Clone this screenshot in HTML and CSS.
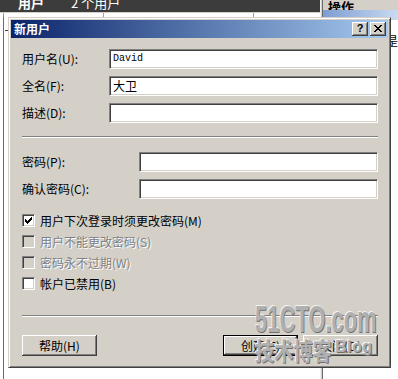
FILE: index.html
```html
<!DOCTYPE html>
<html lang="zh-CN">
<head>
<meta charset="utf-8">
<title>新用户</title>
<link rel="stylesheet" href="styles.css">
</head>
<body>
<div class="mmc">
  <div class="leftpane">
    <div class="darkbar"><span class="strong">用户</span><span>2 个用户</span></div>
    <div class="listhead"><div class="col c1"></div><div class="col c2"></div><div class="col c3"></div></div>
    <div class="listbody"><div class="tick"></div></div>
  </div>
  <div class="splitter"></div>
  <div class="rightpane">
    <div class="acthead">操作</div>
    <div class="actbar"></div>
    <div class="actbody"><span class="peek">是</span></div>
  </div>
</div>

<div class="dialog">
  <div class="titlebar">
    <span class="title">新用户</span>
    <div class="tbtns">
      <div class="tbtn help">?</div>
      <div class="tbtn close">
        <svg width="8" height="7" viewBox="0 0 8 7" shape-rendering="crispEdges"><path d="M0 0h2v1h-2zM6 0h2v1h-2zM1 1h2v1h-2zM5 1h2v1h-2zM2 2h4v1h-4zM3 3h2v1h-2zM2 4h4v1h-4zM1 5h2v1h-2zM5 5h2v1h-2zM0 6h2v1h-2zM6 6h2v1h-2z" fill="#000"/></svg>
      </div>
    </div>
  </div>
  <div class="content">
    <div class="grid g1">
      <label>用户名(U):</label><div class="field mono">David</div>
      <label>全名(F):</label><div class="field">大卫</div>
      <label>描述(D):</label><div class="field"></div>
    </div>
    <div class="hr hr1"></div>
    <div class="grid g2">
      <label>密码(P):</label><div class="field"></div>
      <label>确认密码(C):</label><div class="field"></div>
    </div>
    <div class="checks">
      <div class="chk"><span class="box"><svg width="7" height="7" viewBox="0 0 7 7" shape-rendering="crispEdges"><path d="M6 0h1v1h-1zM5 1h2v1h-2zM0 2h1v1h-1zM4 2h3v1h-3zM0 3h2v1h-2zM3 3h3v1h-3zM0 4h5v1h-5zM1 5h3v1h-3zM2 6h1v1h-1z" fill="#000"/></svg></span><span>用户下次登录时须更改密码(M)</span></div>
      <div class="chk disabled"><span class="box"></span><span>用户不能更改密码(S)</span></div>
      <div class="chk disabled"><span class="box"></span><span>密码永不过期(W)</span></div>
      <div class="chk"><span class="box"></span><span>帐户已禁用(B)</span></div>
    </div>
    <div class="hr hr2"></div>
    <div class="buttons">
      <button class="btn">帮助(H)</button>
      <div class="right">
        <button class="btn default">创建(E)</button>
        <button class="btn">关闭(O)</button>
      </div>
    </div>
  </div>
</div>

<div class="watermark">
  <div class="wm-top">51CTO.com</div>
  <div class="wm-bottom"><span class="wm-cn">技术博客</span><span class="wm-blog">Blog</span></div>
</div>
</body>
</html>
```

FILE: styles.css
```css
* { box-sizing: border-box; }
html, body { margin: 0; padding: 0; }
body {
  width: 398px;
  height: 379px;
  overflow: hidden;
  background: #fff;
  font-family: "Noto Sans CJK SC", "Noto Sans", sans-serif;
  font-size: 12px;
  color: #000;
  position: relative;
}

/* background management console */
.mmc { display: flex; height: 379px; }
.leftpane { width: 325px; display: flex; flex-direction: column; }
.darkbar {
  height: 12px;
  background: #3c3c3c;
  color: #fff;
  overflow: hidden;
  display: flex;
  gap: 27px;
  padding-left: 18px;
  font-size: 13px;
  line-height: 13px;
}
.darkbar span { margin-top: -4px; }
.darkbar .strong { font-weight: bold; }
.listhead { height: 5px; border-top: 1px solid #d4d0c8; display: flex; }
.listhead .col { height: 100%; border-right: 1px solid #a0a0a0; }
.listhead .c1 { width: 4px; }
.listhead .c2 { width: 100px; }
.listhead .c3 { width: 150px; }
.listbody { flex: 1; margin-left: 3px; border-left: 1px solid #6b6b6b; box-shadow: 1px 0 0 #c8c8c8; }
.tick { margin-top: 13px; width: 3px; height: 1px; background: #404040; margin-left: 1px; }
.splitter { width: 3px; border-left: 1px solid #f0f0f0; border-right: 1px solid #6b6b6b; background: #d4d0c8; }
.rightpane { flex: 1; display: flex; flex-direction: column; }
.acthead {
  height: 10px;
  background: #d4d0c8;
  font-weight: bold;
  font-size: 13px;
  line-height: 13px;
  overflow: hidden;
  padding-left: 5px;
}
.actbar { height: 10px; background: linear-gradient(to right, #7d9dd2, #c9daf2); }
.actbody { padding: 15px 0 0 63px; font-size: 12px; line-height: 12px; }

/* dialog window */
.dialog {
  position: absolute;
  left: 8px;
  top: 17px;
  width: 383px;
  height: 351px;
  background: #d4d0c8;
  border: 1px solid;
  border-color: #d4d0c8 #404040 #404040 #d4d0c8;
  box-shadow: inset 1px 1px 0 #fff, inset -1px -1px 0 #808080;
  padding: 2px;
  display: flex;
  flex-direction: column;
}
.titlebar {
  height: 18px;
  flex: none;
  display: flex;
  align-items: center;
  justify-content: space-between;
  padding: 0 2px 0 3px;
  background: linear-gradient(to right, #0a246a, #a6caf0);
}
.title { color: #fff; font-weight: bold; font-size: 12px; line-height: 14px; }
.tbtns { display: flex; gap: 2px; }
.tbtn {
  width: 16px;
  height: 14px;
  background: #d4d0c8;
  box-shadow: inset -1px -1px 0 #404040, inset 1px 1px 0 #fff, inset -2px -2px 0 #808080;
  display: flex;
  align-items: center;
  justify-content: center;
}
.tbtn.help {
  font-family: "Liberation Sans", sans-serif;
  font-weight: bold;
  font-size: 11px;
  line-height: 11px;
  padding-bottom: 1px;
}
.tbtn.close svg { margin-top: -1px; margin-left: -1px; }

.content { padding: 11px 10px 0 11px; display: flex; flex-direction: column; }
.grid { display: grid; grid-auto-rows: 20px; row-gap: 7px; align-items: center; }
.g1 { grid-template-columns: 87px 1fr; }
.g2 { grid-template-columns: 117px 1fr; margin-top: 14px; }
label { font-size: 12px; line-height: 14px; }
.field {
  height: 20px;
  background: #fff;
  border: 1px solid;
  border-color: #808080 #fff #fff #808080;
  box-shadow: inset 1px 1px 0 #404040, inset -1px -1px 0 #d4d0c8;
  padding: 0 3px;
  font-size: 12px;
  line-height: 18px;
}
.field.mono { font-family: "Liberation Mono", monospace; font-size: 10px; }

.hr { height: 2px; border-top: 1px solid #808080; border-bottom: 1px solid #fff; }
.hr1 { margin-top: 13px; }
.hr2 { margin-top: 25px; }

.checks { margin-top: 15px; display: flex; flex-direction: column; gap: 8px; }
.chk { display: flex; align-items: center; gap: 5px; height: 13px; line-height: 14px; }
.box {
  width: 13px;
  height: 13px;
  flex: none;
  background: #fff;
  border: 1px solid;
  border-color: #808080 #fff #fff #808080;
  box-shadow: inset 1px 1px 0 #404040, inset -1px -1px 0 #d4d0c8;
  padding: 2px 0 0 2px;
  display: flex;
}
.chk.disabled { color: #808080; text-shadow: 1px 1px 0 #fff; }
.chk.disabled .box { background: #d4d0c8; }

.buttons { margin-top: 18px; display: flex; justify-content: space-between; }
.right { display: flex; gap: 5px; }
.btn {
  width: 75px;
  height: 21px;
  border: none;
  margin: 0;
  padding: 0;
  background: #d4d0c8;
  box-shadow: inset -1px -1px 0 #404040, inset 1px 1px 0 #fff, inset -2px -2px 0 #808080;
  font-family: "Noto Sans CJK SC", sans-serif;
  font-size: 12px;
  color: #000;
}
.btn.default { border: 1px solid #000; }

/* watermark overlay */
.watermark {
  position: absolute;
  left: 255px;
  top: 302px;
  width: 130px;
  color: #b0b0b0;
  font-weight: bold;
}
.wm-top {
  font-family: "Liberation Sans", sans-serif;
  font-size: 36px;
  line-height: 36px;
  height: 34px;
  transform: scaleX(0.61);
  transform-origin: left top;
  white-space: nowrap;
  text-shadow: 1px 1px 0 #6e6e6e, -1px -1px 0 #f4f4f4;
}
.wm-bottom { display: flex; align-items: center; height: 28px; }
.wm-cn {
  display: inline-block;
  width: 80px;
  font-family: "Noto Sans CJK SC", sans-serif;
  font-size: 24px;
  line-height: 28px;
  white-space: nowrap;
  transform: scaleX(0.8);
  transform-origin: left center;
  text-shadow: 1px 1px 0 #6e6e6e, -1px -1px 0 #f4f4f4;
}
.wm-blog {
  font-family: "Liberation Sans", sans-serif;
  font-size: 16px;
  line-height: 16px;
  margin-top: -6px;
  letter-spacing: 0.5px;
  text-shadow: 1px 1px 0 #6e6e6e, -1px -1px 0 #f4f4f4;
}
```
